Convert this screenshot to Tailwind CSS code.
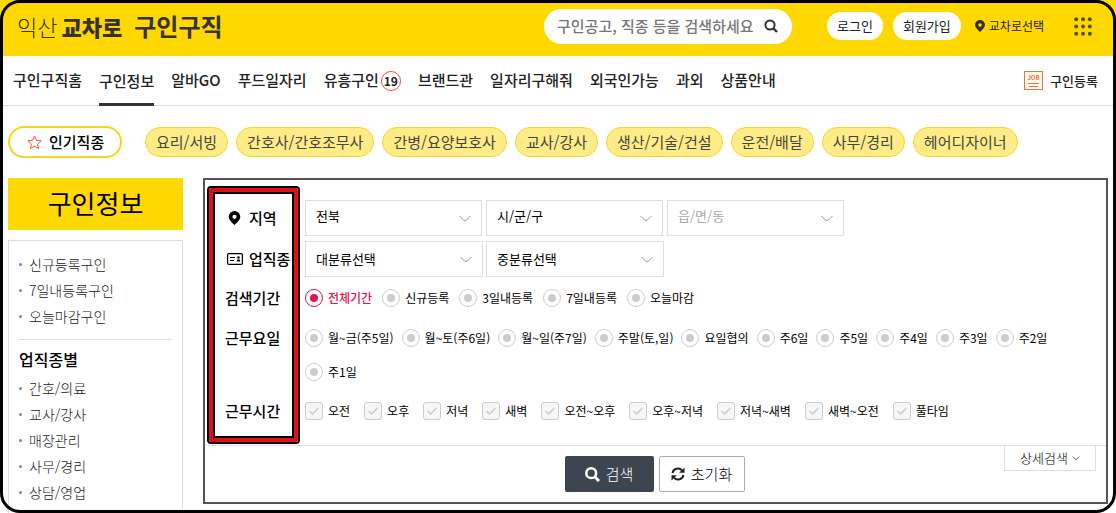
<!DOCTYPE html>
<html lang="ko">
<head>
  <meta charset="UTF-8">
  <meta name="viewport" content="width=device-width, initial-scale=1.0">
  <title>익산교차로 구인구직</title>
  <script src="https://cdn.jsdelivr.net/npm/@tailwindcss/browser@4"></script>
</head>
<body class="bg-white font-['Noto_Sans_CJK_KR',sans-serif] text-[#222]">
  <div class="relative flex h-screen min-h-[513px] flex-col overflow-hidden">

    <!-- 상단 헤더 -->
    <header class="flex h-14 shrink-0 items-center bg-[#ffd800] pr-6 pb-1 pl-[17px]">
      <a href="#" class="flex items-center text-[#333] whitespace-nowrap">
        <span class="text-[22px] font-light">익산</span>
        <span class="ml-1 text-[22px] font-black">교차로</span>
        <span class="ml-3 text-2xl font-bold">구인구직</span>
      </a>
      <form class="ml-auto flex h-[35px] w-[248px] items-center rounded-full bg-white pr-[14px] pl-[13px]">
        <input type="text" aria-label="통합검색" placeholder="구인공고, 직종 등을 검색하세요" class="w-0 grow text-[15px] font-medium outline-none placeholder:text-[#777]">
        <button type="button" aria-label="검색" class="ml-1">
          <svg class="size-[14px]" viewBox="0 0 14 14" fill="none" stroke="#333" stroke-width="2"><circle cx="6" cy="6" r="4.6"/><path d="M9.4 9.4 13 13" stroke-width="2.4"/></svg>
        </button>
      </form>
      <button type="button" class="ml-[35px] h-7 rounded-full bg-white px-[10px] text-[13px] whitespace-nowrap">로그인</button>
      <button type="button" class="ml-[10px] h-7 rounded-full bg-white px-[10px] text-[13px] whitespace-nowrap">회원가입</button>
      <a href="#" class="ml-[14px] flex items-center gap-1 text-xs whitespace-nowrap">
        <svg class="h-3 w-[10px]" viewBox="0 0 10 12"><path fill="#333" fill-rule="evenodd" d="M5 0a5 5 0 0 0-5 5c0 2.600 2.600 4.600 5 7 2.400-2.400 5-4.400 5-7a5 5 0 0 0-5-5Zm0 3.200a1.800 1.800 0 1 1 0 3.600 1.800 1.800 0 0 1 0-3.600Z"/></svg>
        교차로선택
      </a>
      <button type="button" aria-label="전체메뉴" class="ml-[30px]">
        <svg class="h-[19px] w-[18px]" viewBox="0 0 18 19" fill="#5a4f1c">
          <circle cx="2.200" cy="2.200" r="2"/><circle cx="9" cy="2.200" r="2"/><circle cx="15.800" cy="2.200" r="2"/>
          <circle cx="2.200" cy="9.500" r="2"/><circle cx="9" cy="9.500" r="2"/><circle cx="15.800" cy="9.500" r="2"/>
          <circle cx="2.200" cy="16.800" r="2"/><circle cx="9" cy="16.800" r="2"/><circle cx="15.800" cy="16.800" r="2"/>
        </svg>
      </button>
    </header>

    <!-- 메인 메뉴 -->
    <nav class="flex h-[50px] shrink-0 items-stretch gap-[17px] border-b border-[#ddd] pr-[18px] pl-[13px] text-[15px] font-medium whitespace-nowrap">
      <a href="#" class="flex items-center">구인구직홈</a>
      <a href="#" class="-mb-px flex items-center border-y-[3px] border-t-transparent border-b-[#333]">구인정보</a>
      <a href="#" class="flex items-center">알바GO</a>
      <a href="#" class="flex items-center">푸드일자리</a>
      <a href="#" class="flex items-center gap-[2px]">유흥구인
        <span class="flex size-5 items-center justify-center rounded-full border border-[#e8503a] text-xs font-bold">19</span>
      </a>
      <a href="#" class="flex items-center">브랜드관</a>
      <a href="#" class="flex items-center">일자리구해줘</a>
      <a href="#" class="flex items-center">외국인가능</a>
      <a href="#" class="flex items-center">과외</a>
      <a href="#" class="flex items-center">상품안내</a>
      <a href="#" class="ml-auto flex items-center gap-[7px] text-[13px]">
        <svg class="size-[19px]" viewBox="0 0 19 19" fill="none" stroke="#e07a3c">
          <rect x=".5" y=".5" width="18" height="18" fill="#fff8f0"/>
          <path d="M4 12.500h11M5 15.500h9"/>
          <text x="9.500" y="9" text-anchor="middle" font-size="6" font-weight="700" fill="#e07a3c" stroke="none">JOB</text>
        </svg>
        구인등록
      </a>
    </nav>

    <!-- 인기직종 -->
    <div class="flex shrink-0 items-center gap-2 pt-5 pl-2 text-[15px] whitespace-nowrap text-[#444]">
      <strong class="mr-[15px] flex h-8 w-[114px] items-center gap-[7px] rounded-full border-2 border-[#f5d321] pl-[17px] font-medium text-black">
        <svg class="size-[15px]" viewBox="0 0 15 15" fill="none" stroke="#f0503c"><path d="m7.500 1 1.900 4.300 4.700.5-3.500 3.100 1 4.600-4.100-2.400-4.100 2.400 1-4.600L.9 5.800l4.700-.5Z"/></svg>
        인기직종
      </strong>
      <a href="#" class="flex h-[30px] items-center rounded-full border border-[#f3d62f] bg-[#ffec87] px-[10px]">요리/서빙</a>
      <a href="#" class="flex h-[30px] items-center rounded-full border border-[#f3d62f] bg-[#ffec87] px-[10px]">간호사/간호조무사</a>
      <a href="#" class="flex h-[30px] items-center rounded-full border border-[#f3d62f] bg-[#ffec87] px-[10px]">간병/요양보호사</a>
      <a href="#" class="flex h-[30px] items-center rounded-full border border-[#f3d62f] bg-[#ffec87] px-[10px]">교사/강사</a>
      <a href="#" class="flex h-[30px] items-center rounded-full border border-[#f3d62f] bg-[#ffec87] px-[10px]">생산/기술/건설</a>
      <a href="#" class="flex h-[30px] items-center rounded-full border border-[#f3d62f] bg-[#ffec87] px-[10px]">운전/배달</a>
      <a href="#" class="flex h-[30px] items-center rounded-full border border-[#f3d62f] bg-[#ffec87] px-[10px]">사무/경리</a>
      <a href="#" class="flex h-[30px] items-center rounded-full border border-[#f3d62f] bg-[#ffec87] px-[10px]">헤어디자이너</a>
    </div>

    <div class="flex grow items-stretch gap-5 pt-5 pr-2 pl-2">
      <!-- 사이드 메뉴 -->
      <aside class="flex w-[175px] shrink-0 flex-col">
        <h1 class="flex h-[52px] items-center justify-center bg-[#ffd800] pb-1 text-[26px] text-black">구인정보</h1>
        <div class="mt-[10px] grow border border-b-0 border-[#ddd] px-[10px] pt-[10px] text-sm text-[#222]">
          <ul class="font-light leading-[26px]">
            <li class="flex items-center gap-[7px]"><i class="size-[3px] rounded-full bg-[#888]"></i><a href="#">신규등록구인</a></li>
            <li class="flex items-center gap-[7px]"><i class="size-[3px] rounded-full bg-[#888]"></i><a href="#">7일내등록구인</a></li>
            <li class="flex items-center gap-[7px]"><i class="size-[3px] rounded-full bg-[#888]"></i><a href="#">오늘마감구인</a></li>
          </ul>
          <h2 class="mt-[10px] border-t border-[#ddd] pt-[7px] text-base font-medium text-black">업직종별</h2>
          <ul class="mt-1 font-light leading-[26px]">
            <li class="flex items-center gap-[7px]"><i class="size-[3px] rounded-full bg-[#888]"></i><a href="#">간호/의료</a></li>
            <li class="flex items-center gap-[7px]"><i class="size-[3px] rounded-full bg-[#888]"></i><a href="#">교사/강사</a></li>
            <li class="flex items-center gap-[7px]"><i class="size-[3px] rounded-full bg-[#888]"></i><a href="#">매장관리</a></li>
            <li class="flex items-center gap-[7px]"><i class="size-[3px] rounded-full bg-[#888]"></i><a href="#">사무/경리</a></li>
            <li class="flex items-center gap-[7px]"><i class="size-[3px] rounded-full bg-[#888]"></i><a href="#">상담/영업</a></li>
          </ul>
        </div>
      </aside>

      <!-- 상세 조건 검색 -->
      <form class="relative grow self-start border-2 border-[#555] text-xs text-black">
        <div class="pt-5 pb-3 pl-5">
          <div role="group" aria-labelledby="lbArea" class="flex items-center">
            <span id="lbArea" class="flex w-20 shrink-0 items-center gap-2 pl-[3px] text-[15px] font-medium whitespace-nowrap">
              <svg class="h-[14px] w-[13px]" viewBox="0 0 12 14"><path fill-rule="evenodd" d="M6 0a5.800 5.800 0 0 0-5.800 5.800C.2 8.900 3.200 11.200 6 14c2.800-2.800 5.800-5.100 5.800-8.200A5.800 5.800 0 0 0 6 0Zm0 3.700a2.100 2.100 0 1 1 0 4.200 2.100 2.100 0 0 1 0-4.200Z"/></svg>
              지역
            </span>
            <div class="flex flex-wrap gap-1 text-[13px]">
              <div class="grid w-[177px] items-center">
                <select aria-label="시/도" class="col-start-1 row-start-1 h-9 appearance-none border border-[#ddd] bg-white px-[10px] pb-1"><option>전북</option></select>
                <svg class="pointer-events-none col-start-1 row-start-1 mr-[11px] h-[7px] w-3 justify-self-end" viewBox="0 0 12 7" fill="none" stroke="#999"><path d="m.5 1 4 4q1.500 1.200 3 0l4-4"/></svg>
              </div>
              <div class="grid w-[177px] items-center">
                <select aria-label="시/군/구" class="col-start-1 row-start-1 h-9 appearance-none border border-[#ddd] bg-white px-[10px] pb-1"><option>시/군/구</option></select>
                <svg class="pointer-events-none col-start-1 row-start-1 mr-[11px] h-[7px] w-3 justify-self-end" viewBox="0 0 12 7" fill="none" stroke="#999"><path d="m.5 1 4 4q1.500 1.200 3 0l4-4"/></svg>
              </div>
              <div class="grid w-[177px] items-center">
                <select aria-label="읍/면/동" disabled class="col-start-1 row-start-1 h-9 appearance-none border border-[#ddd] bg-white px-[10px] pb-1 text-[#aaa] opacity-100"><option>읍/면/동</option></select>
                <svg class="pointer-events-none col-start-1 row-start-1 mr-[11px] h-[7px] w-3 justify-self-end" viewBox="0 0 12 7" fill="none" stroke="#999"><path d="m.5 1 4 4q1.500 1.200 3 0l4-4"/></svg>
              </div>
            </div>
          </div>

          <div role="group" aria-labelledby="lbJob" class="mt-[5px] flex items-center">
            <span id="lbJob" class="flex w-20 shrink-0 items-center gap-[6px] pl-[2px] text-[15px] font-medium whitespace-nowrap">
              <svg class="h-3 w-4" viewBox="0 0 16 12" fill="none" stroke="#000"><rect x=".6" y=".6" width="14.800" height="10.800" rx="1.200" stroke-width="1.200"/><path d="M3 4.500h5M3 7.500h4"/><circle cx="11.500" cy="4.500" r="1.200" fill="#000" stroke="none"/><path d="M9.700 8.500a1.800 2.200 0 0 1 3.600 0Z" fill="#000" stroke="none"/></svg>
              업직종
            </span>
            <div class="flex flex-wrap gap-[3px] text-[13px]">
              <div class="grid w-[178px] items-center">
                <select aria-label="대분류" class="col-start-1 row-start-1 h-9 appearance-none border border-[#ddd] bg-white px-[10px]"><option>대분류선택</option></select>
                <svg class="pointer-events-none col-start-1 row-start-1 mr-[11px] h-[7px] w-3 justify-self-end" viewBox="0 0 12 7" fill="none" stroke="#999"><path d="m.5 1 4 4q1.500 1.200 3 0l4-4"/></svg>
              </div>
              <div class="grid w-[178px] items-center">
                <select aria-label="중분류" class="col-start-1 row-start-1 h-9 appearance-none border border-[#ddd] bg-white px-[10px]"><option>중분류선택</option></select>
                <svg class="pointer-events-none col-start-1 row-start-1 mr-[11px] h-[7px] w-3 justify-self-end" viewBox="0 0 12 7" fill="none" stroke="#999"><path d="m.5 1 4 4q1.500 1.200 3 0l4-4"/></svg>
              </div>
            </div>
          </div>

          <div role="group" aria-labelledby="lbTerm" class="flex">
            <span id="lbTerm" class="w-20 shrink-0 text-[15px] leading-[42px] font-medium">검색기간</span>
            <div class="flex flex-wrap gap-x-[10px] leading-[42px]">
              <label class="flex items-center gap-[5px] has-checked:font-medium has-checked:text-[#e6144a]"><input type="radio" name="term" checked class="size-[18px] appearance-none rounded-full border border-[#ccc] bg-[#ccc] bg-clip-content p-1 checked:border-[#e6144a] checked:bg-[#e6144a]">전체기간</label>
              <label class="flex items-center gap-[5px] has-checked:font-medium has-checked:text-[#e6144a]"><input type="radio" name="term" class="size-[18px] appearance-none rounded-full border border-[#ccc] bg-[#ccc] bg-clip-content p-1 checked:border-[#e6144a] checked:bg-[#e6144a]">신규등록</label>
              <label class="flex items-center gap-[5px] has-checked:font-medium has-checked:text-[#e6144a]"><input type="radio" name="term" class="size-[18px] appearance-none rounded-full border border-[#ccc] bg-[#ccc] bg-clip-content p-1 checked:border-[#e6144a] checked:bg-[#e6144a]">3일내등록</label>
              <label class="flex items-center gap-[5px] has-checked:font-medium has-checked:text-[#e6144a]"><input type="radio" name="term" class="size-[18px] appearance-none rounded-full border border-[#ccc] bg-[#ccc] bg-clip-content p-1 checked:border-[#e6144a] checked:bg-[#e6144a]">7일내등록</label>
              <label class="flex items-center gap-[5px] has-checked:font-medium has-checked:text-[#e6144a]"><input type="radio" name="term" class="size-[18px] appearance-none rounded-full border border-[#ccc] bg-[#ccc] bg-clip-content p-1 checked:border-[#e6144a] checked:bg-[#e6144a]">오늘마감</label>
            </div>
          </div>

          <div role="group" aria-labelledby="lbDay" class="mt-[2px] flex">
            <span id="lbDay" class="w-20 shrink-0 text-[15px] leading-[34px] font-medium">근무요일</span>
            <div class="flex flex-wrap gap-x-2 leading-[34px]">
              <label class="flex items-center gap-[5px] has-checked:text-[#e6144a]"><input type="radio" name="day" class="size-[18px] appearance-none rounded-full border border-[#ccc] bg-[#ccc] bg-clip-content p-1 checked:border-[#e6144a] checked:bg-[#e6144a]">월~금(주5일)</label>
              <label class="flex items-center gap-[5px] has-checked:text-[#e6144a]"><input type="radio" name="day" class="size-[18px] appearance-none rounded-full border border-[#ccc] bg-[#ccc] bg-clip-content p-1 checked:border-[#e6144a] checked:bg-[#e6144a]">월~토(주6일)</label>
              <label class="flex items-center gap-[5px] has-checked:text-[#e6144a]"><input type="radio" name="day" class="size-[18px] appearance-none rounded-full border border-[#ccc] bg-[#ccc] bg-clip-content p-1 checked:border-[#e6144a] checked:bg-[#e6144a]">월~일(주7일)</label>
              <label class="flex items-center gap-[5px] has-checked:text-[#e6144a]"><input type="radio" name="day" class="size-[18px] appearance-none rounded-full border border-[#ccc] bg-[#ccc] bg-clip-content p-1 checked:border-[#e6144a] checked:bg-[#e6144a]">주말(토,일)</label>
              <label class="flex items-center gap-[5px] has-checked:text-[#e6144a]"><input type="radio" name="day" class="size-[18px] appearance-none rounded-full border border-[#ccc] bg-[#ccc] bg-clip-content p-1 checked:border-[#e6144a] checked:bg-[#e6144a]">요일협의</label>
              <label class="flex items-center gap-[5px] has-checked:text-[#e6144a]"><input type="radio" name="day" class="size-[18px] appearance-none rounded-full border border-[#ccc] bg-[#ccc] bg-clip-content p-1 checked:border-[#e6144a] checked:bg-[#e6144a]">주6일</label>
              <label class="flex items-center gap-[5px] has-checked:text-[#e6144a]"><input type="radio" name="day" class="size-[18px] appearance-none rounded-full border border-[#ccc] bg-[#ccc] bg-clip-content p-1 checked:border-[#e6144a] checked:bg-[#e6144a]">주5일</label>
              <label class="flex items-center gap-[5px] has-checked:text-[#e6144a]"><input type="radio" name="day" class="size-[18px] appearance-none rounded-full border border-[#ccc] bg-[#ccc] bg-clip-content p-1 checked:border-[#e6144a] checked:bg-[#e6144a]">주4일</label>
              <label class="flex items-center gap-[5px] has-checked:text-[#e6144a]"><input type="radio" name="day" class="size-[18px] appearance-none rounded-full border border-[#ccc] bg-[#ccc] bg-clip-content p-1 checked:border-[#e6144a] checked:bg-[#e6144a]">주3일</label>
              <label class="flex items-center gap-[5px] has-checked:text-[#e6144a]"><input type="radio" name="day" class="size-[18px] appearance-none rounded-full border border-[#ccc] bg-[#ccc] bg-clip-content p-1 checked:border-[#e6144a] checked:bg-[#e6144a]">주2일</label>
              <label class="flex items-center gap-[5px] has-checked:text-[#e6144a]"><input type="radio" name="day" class="size-[18px] appearance-none rounded-full border border-[#ccc] bg-[#ccc] bg-clip-content p-1 checked:border-[#e6144a] checked:bg-[#e6144a]">주1일</label>
            </div>
          </div>

          <div role="group" aria-labelledby="lbTime" class="flex">
            <span id="lbTime" class="w-20 shrink-0 text-[15px] leading-[44px] font-medium">근무시간</span>
            <div id="timeList" class="flex flex-wrap gap-x-[14px] leading-[44px]"></div>
          </div>
        </div>

        <div class="relative flex justify-center gap-[5px] border-t border-[#ddd] py-[10px] pr-[2px] text-[15px]">
          <button type="submit" class="flex h-9 w-[89px] items-center justify-center gap-[6px] rounded-xs bg-[#3d4650] font-light text-white">
            <svg class="size-[15px]" viewBox="0 0 15 15" fill="none" stroke="#fff"><circle cx="6.200" cy="6.200" r="4.900" stroke-width="2.500"/><path d="m10 10 4 4" stroke-width="3"/></svg>
            검색
          </button>
          <button type="reset" class="flex h-9 w-[86px] items-center justify-center gap-[6px] rounded-xs border border-[#aaa] bg-white font-light text-black">
            <svg class="size-[14px]" viewBox="0 0 14 14" fill="none" stroke="#222" stroke-width="2"><path d="M1.500 6A5.500 5.500 0 0 1 11 3.300M12.500 8A5.500 5.500 0 0 1 3 10.700"/><path d="M13.500.5v5.300H8.200ZM.5 13.500V8.200h5.300Z" fill="#222" stroke="none"/></svg>
            초기화
          </button>
          <button type="button" class="absolute -top-px right-[10px] flex h-[26px] w-[92px] items-center justify-center gap-1 border border-[#ddd] bg-white text-[13px] font-light text-black">
            상세검색
            <svg class="h-[5px] w-2" viewBox="0 0 8 5" fill="none" stroke="#555"><path d="m.8.6 3.200 3.200L7.200.6"/></svg>
          </button>
        </div>

        <!-- 검색 항목 강조 표시 -->
        <div class="pointer-events-none absolute top-[6px] left-[2px] h-[258px] w-[93px] rounded-sm border-2 border-black">
          <div class="h-full rounded-xs border-4 border-[#e01010]">
            <div class="h-full border-2 border-black"></div>
          </div>
        </div>
      </form>
    </div>

    <!-- 화면 테두리 -->
    <div class="pointer-events-none absolute inset-0 rounded-[20px] border-[3px] border-black"></div>
  </div>

  <script>
    const timeList = document.getElementById('timeList');
    const times = ['오전', '오후', '저녁', '새벽', '오전~오후', '오후~저녁', '저녁~새벽', '새벽~오전', '풀타임'];

    // 근무시간 체크박스 출력
    timeList.innerHTML = times.map(time => `
      <label class="flex items-center gap-[5px]">
        <span class="grid place-items-center">
          <input type="checkbox" name="time" value="${time}" class="peer col-start-1 row-start-1 size-[18px] appearance-none rounded-[3px] border border-[#ccc] bg-[#f6f6f6]">
          <svg class="pointer-events-none col-start-1 row-start-1 h-2 w-[10px] stroke-[#ccc] peer-checked:stroke-[#e6144a]" viewBox="0 0 10 8" fill="none" stroke-width="1.500"><path d="m.6 4 3 3L9.400 1"/></svg>
        </span>${time}
      </label>
    `).join('');
  </script>
</body>
</html>
